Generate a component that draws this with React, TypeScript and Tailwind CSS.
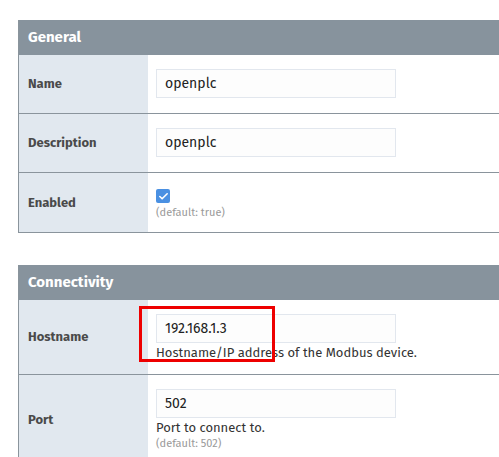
import { Check } from "lucide-react"

type Row = {
  label: string
  value?: string
  checkbox?: boolean
  help?: string
  def?: string
  mark?: boolean
}

const sections: { title: string; rows: Row[] }[] = [
  {
    title: "General",
    rows: [
      { label: "Name", value: "openplc" },
      { label: "Description", value: "openplc" },
      { label: "Enabled", checkbox: true, def: "(default: true)" },
    ],
  },
  {
    title: "Connectivity",
    rows: [
      { label: "Hostname", value: "192.168.1.3", help: "Hostname/IP address of the Modbus device.", mark: true },
      { label: "Port", value: "502", help: "Port to connect to.", def: "(default: 502)" },
    ],
  },
]

function Field({ row }: { row: Row }) {
  if (row.checkbox) {
    return (
      <div className="pt-[16px] pb-[11px]">
        <div className="w-[14px] h-[14px] rounded-[2px] bg-[#4a90e2] flex items-center justify-center">
          <Check className="w-[11px] h-[11px] text-white" strokeWidth={3.5} />
        </div>
        <p className="mt-[2px] text-[11px] leading-[16px] text-[#9a9a9a]">{row.def}</p>
      </div>
    )
  }
  const extra = row.help || row.def
  return (
    <div className={`relative pt-[14px] ${extra ? "pb-[13px]" : "pb-[15px]"}`}>
      {row.mark && (
        <div className="absolute left-[-17px] top-[6px] w-[136px] h-[56px] border-[3px] border-[#ee0000]" />
      )}
      <div className="w-[240px] h-[29px] border border-[#e2e7ee] bg-[#fdfdfd] px-[8px] flex items-center text-[14px] text-[#222]">
        {row.value}
      </div>
      {row.help && <p className="text-[13px] leading-[17px] text-[#333] mt-[1px]">{row.help}</p>}
      {row.def && <p className="text-[11px] leading-[16px] text-[#9a9a9a]">{row.def}</p>}
    </div>
  )
}

export default function App() {
  return (
    <div className="w-[499px] h-[457px] overflow-hidden bg-white pl-[18px] pt-[20px] font-['Fira_Sans','Lato','Open_Sans',sans-serif]">
      <div className="w-[520px] flex flex-col gap-[32px]">
        {sections.map((s) => (
          <div key={s.title} className="border-l border-b border-[#8a949c]">
            <div className="h-[34px] bg-[#87939d] px-[9px] flex items-center text-white font-bold text-[15px]">
              {s.title}
            </div>
            {s.rows.map((r, i) => (
              <div
                key={r.label}
                className={`flex border-t ${i > 0 ? "border-[#8a949c]" : "border-[#87939d]"}`}
              >
                <div className="w-[129px] bg-[#e1e8ef] px-[9px] flex items-center text-[13px] font-bold text-[#4a4a4a]">
                  {r.label}
                </div>
                <div className="flex-1 pl-[8px]">
                  <Field row={r} />
                </div>
              </div>
            ))}
          </div>
        ))}
      </div>
    </div>
  )
}
